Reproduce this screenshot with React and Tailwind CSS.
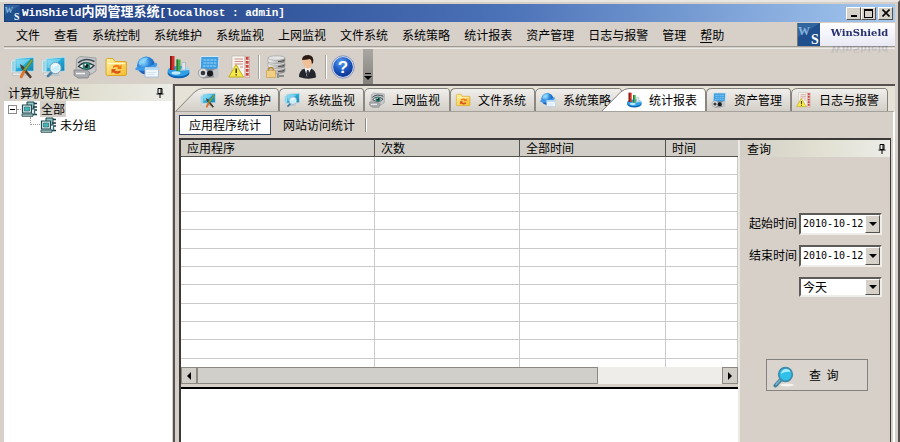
import { useState } from "react";

const menus = [
  "文件", "查看", "系统控制", "系统维护", "系统监视", "上网监视", "文件系统",
  "系统策略", "统计报表", "资产管理", "日志与报警", "管理",
];

/* Shared gradients for the toolbar and tab icons */
function IconDefs() {
  return (
    <svg className="absolute h-0 w-0" aria-hidden="true">
      <defs>
        <linearGradient id="screen" x1="0" y1="0" x2="1" y2="1">
          <stop offset="0" stopColor="#7fdcf5" />
          <stop offset="0.5" stopColor="#25a9d8" />
          <stop offset="1" stopColor="#0d7fae" />
        </linearGradient>
        <linearGradient id="folder" x1="0" y1="0" x2="1" y2="1">
          <stop offset="0" stopColor="#fff3a0" />
          <stop offset="1" stopColor="#f3bb2c" />
        </linearGradient>
        <radialGradient id="globe" cx="0.35" cy="0.3" r="0.8">
          <stop offset="0" stopColor="#9fe0ff" />
          <stop offset="0.45" stopColor="#2a86dc" />
          <stop offset="1" stopColor="#0b3f9c" />
        </radialGradient>
        <radialGradient id="help" cx="0.4" cy="0.25" r="0.8">
          <stop offset="0" stopColor="#5b9cec" />
          <stop offset="0.5" stopColor="#1f5cc4" />
          <stop offset="1" stopColor="#0b2f8c" />
        </radialGradient>
        <linearGradient id="metal" x1="0" y1="0" x2="1" y2="0">
          <stop offset="0" stopColor="#f4f4f4" />
          <stop offset="0.6" stopColor="#b4b4b4" />
          <stop offset="1" stopColor="#7c7c7c" />
        </linearGradient>
        <linearGradient id="tabFill" x1="0" y1="0" x2="0" y2="1">
          <stop offset="0" stopColor="#f1efec" />
          <stop offset="1" stopColor="#d3cfc8" />
        </linearGradient>
      </defs>
    </svg>
  );
}

function Icon({ className, children }) {
  return (
    <svg viewBox="0 0 24 24" className={className} aria-hidden="true">
      {children}
    </svg>
  );
}

function Monitors() {
  return (
    <>
      <path d="M.5 6 8 5v11l-7.500 1z" fill="#8fd6ea" stroke="#d8e6ea" strokeWidth="1" />
      <path d="M1 18h8l1 2.500H2z" fill="#e9e9e9" stroke="#aaa" strokeWidth=".5" />
      <path d="M4 3.500 23 2v14L4 17z" fill="url(#screen)" stroke="#c4dbe2" strokeWidth="1.200" />
      <path d="m5.500 5 14-1.200-10 9-4 .2z" fill="#a8ecfb" opacity=".5" />
      <path d="M10 17h6l2 4H9z" fill="#bcc5c8" />
    </>
  );
}

function MaintainIcon({ className }) {
  return (
    <Icon className={className}>
      <Monitors />
      <path d="m9 9 3 2 9 11-2 1.500L10 13z" fill="#4c3d2f" />
      <path d="M20.500 4 22 5.500 14.500 16 12 15z" fill="#7da83c" stroke="#4e6830" strokeWidth=".5" />
      <path d="m12 15 2.500 1.500-3.500 7-2.500-1z" fill="#e0722a" />
    </Icon>
  );
}

function WatchIcon({ className }) {
  return (
    <Icon className={className}>
      <Monitors />
      <path d="m10 17-4 4" stroke="#4a7fa4" strokeWidth="2.800" strokeLinecap="round" />
      <circle cx="13.500" cy="13" r="4.800" fill="#c9effa" stroke="#e8f3f8" strokeWidth="2" />
      <circle cx="13.500" cy="13" r="5.600" fill="none" stroke="#578ba8" strokeWidth=".7" />
      <path d="M11 12.500q1-3 4-2.500" stroke="#fff" strokeWidth="1.400" fill="none" />
    </Icon>
  );
}

function EyeIcon({ className }) {
  return (
    <Icon className={className}>
      <path d="M3.500 4 7 1.500 23 3v13l-6 4-14-2z" fill="#c6c8ca" stroke="#939598" strokeWidth=".8" />
      <path d="M1 15h13l3 3-2 5H5l-4-3z" fill="#a9abae" stroke="#77797c" strokeWidth=".7" />
      <path d="M3 18.500h9" stroke="#f4f4f4" strokeWidth="1.500" />
      <path d="M5.500 11.500q6-7 15.500-1-6 7-15.500 1z" fill="#f4f7f7" stroke="#2c3b40" strokeWidth="1.300" />
      <circle cx="13.500" cy="11" r="3.800" fill="#2f8376" />
      <circle cx="13.500" cy="11" r="1.900" fill="#0d2320" />
      <circle cx="12.300" cy="9.700" r=".9" fill="#fff" />
      <path d="M5 8q7-6 16.500-1.500" fill="none" stroke="#3e4b52" strokeWidth="1.500" />
    </Icon>
  );
}

function FolderIcon({ className }) {
  return (
    <Icon className={className}>
      <path d="M2 5q0-1.500 1.500-1.500H9l2 3h10q1.500 0 1.500 1.500v11q0 1.500-1.500 1.500H3.500Q2 20.500 2 19z" fill="url(#folder)" stroke="#d9a01f" strokeWidth=".9" />
      <path d="M3.500 8.500H21" stroke="#fff8cf" strokeWidth="1.200" />
      <path d="M9 11q4-2.500 7 0l1.500-1.500V14h-4.500l1.300-1.300Q12 11.300 9 13z" fill="#ee7a1b" />
      <path d="M16.500 17.500q-4 2.500-7.500-.3L7.500 18.500V14H12l-1.300 1.400q2.300 1.600 5.800 0z" fill="#d9531a" />
    </Icon>
  );
}

function WebIcon({ className }) {
  return (
    <Icon className={className}>
      <circle cx="11" cy="10.500" r="9" fill="url(#globe)" />
      <path d="M4 7q4-5 9-4-1 3-4 3.500T6 10q-3 0-2-3z" fill="#8edcff" opacity=".7" />
      <path d="M.5 15Q-.5 11 6 12.500q9 .5 15-5 3 2-1 5-7 5-19.500 2.500z" fill="#3f9be9" />
      <path d="M10 12.500h13.500V22H10z" fill="#eef6fd" stroke="#9fb9d6" strokeWidth=".8" />
      <path d="M10 12.500h13.500V15H10z" fill="#b9dcf7" />
      <path d="M12 17.500h9M12 19.500h7" stroke="#cfe0ef" strokeWidth=".8" />
    </Icon>
  );
}

function ChartIcon({ className }) {
  return (
    <Icon className={className}>
      <ellipse cx="12.500" cy="18" rx="11" ry="5.200" fill="#0f62b4" />
      <ellipse cx="12.500" cy="16" rx="11" ry="5.200" fill="#2f9fe6" />
      <path d="m12.500 16 11-1q-1-3-6-3.800z" fill="#9bdcfa" />
      <path d="M4 1h4.500v14H4z" fill="#d0322a" />
      <path d="M4 1h1.700v14H4z" fill="#7d1713" />
      <path d="M10.500 4.500h4V16h-4z" fill="#49ad4e" />
      <path d="M10.500 4.500H12V16h-1.500z" fill="#257a35" />
      <path d="M16 7.500h3.500V15H16z" fill="#dfe5ea" stroke="#95a3b1" strokeWidth=".5" />
      <ellipse cx="10" cy="18" rx="4.500" ry="1.700" fill="#bfeafb" />
    </Icon>
  );
}

function AssetIcon({ className }) {
  return (
    <Icon className={className}>
      <path d="M4 1.500h18L21 17H3z" fill="#3f9fe2" stroke="#d6e4ee" strokeWidth="1" />
      <path d="M6.500 5H20M6.500 8H19.500M6 11h13" stroke="#a5d8fa" strokeWidth="1" strokeDasharray="2.600 .8" />
      <path d="m2 15 17-1.500 2 8.500-15 1.500z" fill="#8b8f94" />
      <path d="m16 15 5.500-2v9l-4.500 1z" fill="#c2c6ca" />
      <circle cx="6" cy="18" r="4.700" fill="#dadcde" stroke="#8c8f93" strokeWidth=".7" />
      <circle cx="6" cy="18" r="2.300" fill="#33373c" />
      <circle cx="13" cy="18.500" r="3" fill="#17191c" />
    </Icon>
  );
}

function LogIcon({ className }) {
  return (
    <Icon className={className}>
      <path d="M4 1h13v20.500H4z" fill="#f7f5f0" stroke="#b9b5ae" strokeWidth=".7" />
      <path d="M6.500 4H15M6.500 6.500H15M6.500 9H15M12 12h3" stroke="#cf8d85" strokeWidth="1" />
      <path d="M17 1.500h4.500v21H17z" fill="#f1d9d4" stroke="#c98b84" strokeWidth=".5" />
      <path d="M19.200 2v20" stroke="#c84640" strokeWidth="2.800" strokeDasharray="2.800 1.200" />
      <path d="M8 9.500 15.500 22H.8z" fill="#f5e94a" stroke="#c3ac1e" strokeWidth="1" strokeLinejoin="round" />
      <path d="M8.200 13.500v4.500M8.200 19.200v1.300" stroke="#4a431a" strokeWidth="1.600" />
    </Icon>
  );
}

function DatabaseIcon({ className }) {
  return (
    <Icon className={className}>
      <path d="M14 18v5M14 21h6" stroke="#8d8d8d" strokeWidth="2" />
      {[13, 8, 3].map((y) => (
        <g key={y}>
          <path d={`M4 ${y}v3q0 2.500 8.500 2.500T21 ${y + 3}v-3z`} fill="url(#metal)" stroke="#888" strokeWidth=".5" />
          <ellipse cx="12.500" cy={y} rx="8.500" ry="2.200" fill="#e3e3e3" stroke="#929292" strokeWidth=".5" />
          <path d={`M14 ${y + 3.5}q4 0 6-1`} stroke="#4d4d4d" strokeWidth="1" fill="none" />
        </g>
      ))}
      <path d="M4.500 15.500q0-3 2.500-3t2.500 3" fill="none" stroke="#b98a28" strokeWidth="1.300" />
      <path d="M2.500 15.500h9v7h-9z" fill="#f0cf85" stroke="#c6973a" strokeWidth=".6" />
    </Icon>
  );
}

function UserIcon({ className }) {
  return (
    <Icon className={className}>
      <path d="M4 22q0-7 6-8.500h6q5 1.500 5 9-8 2.500-17-.5z" fill="#25262c" />
      <path d="m9.500 13 2.500 9 4.500-9z" fill="#f4f4f4" />
      <path d="m12 15 1.600.2.700 3.500-2 3-1-3.500z" fill="#2c3140" />
      <path d="M7 5q0-3.500 5-3.500t5.500 4.500q0 5.500-4.500 8-5-2-6-9z" fill="#eebf96" />
      <path d="M7 5q0-5 6.500-5 6 .5 4.500 8l-1.200 1q0-4-1.800-5Q11 5 7 5z" fill="#2a1b14" />
    </Icon>
  );
}

function HelpIcon({ className }) {
  return (
    <Icon className={className}>
      <circle cx="12" cy="12" r="11.200" fill="#dfe5f1" stroke="#6d83b4" strokeWidth=".8" />
      <circle cx="12" cy="12" r="9.900" fill="url(#help)" />
      <text x="12" y="17.800" textAnchor="middle" fontSize="17" fontWeight="700" fontFamily="'Liberation Sans', sans-serif" fill="#fff">
        ?
      </text>
    </Icon>
  );
}

function ComputersIcon() {
  return (
    <svg viewBox="0 0 17 16" className="h-4 w-[17px] shrink-0" aria-hidden="true">
      <path d="M6 1h7v7H6z" fill="#93c9c4" stroke="#1d3f49" />
      <path d="M13 2.500h3M12 6h4M13 9h3M11 13.500h5" stroke="#173844" strokeWidth="1.500" />
      <path d="M1.500 4h9v8h-9z" fill="#d9e9e6" stroke="#1d4b55" strokeWidth="1.200" />
      <path d="M3.500 6h5v4h-5z" fill="#3fb9b8" stroke="#235661" strokeWidth=".6" />
      <path d="M1 13h11v2.300H1z" fill="#a9cbc7" stroke="#1d3f49" strokeWidth=".8" />
      <path d="M13.500 9.500v4" stroke="#35707a" strokeWidth="1.500" />
    </svg>
  );
}

function SearchIcon() {
  return (
    <svg viewBox="0 0 24 24" className="mt-1 h-6 w-6 shrink-0" aria-hidden="true">
      <ellipse cx="14" cy="20" rx="7" ry="1.500" fill="#f4f4f2" />
      <path d="m7.500 15-5 5.500" stroke="#3f7f9c" strokeWidth="4" strokeLinecap="round" />
      <path d="m7.500 14.500-4.500 5" stroke="#74b7d0" strokeWidth="1.500" strokeLinecap="round" />
      <circle cx="12.500" cy="9.500" r="6.800" fill="#31c0ea" stroke="#3f89ab" strokeWidth="1.700" />
      <path d="M8 9q.5-5 5.500-5 3 0 4 3-5.500-1-9.500 2z" fill="#a8edfb" />
    </svg>
  );
}

function PinIcon() {
  return (
    <svg viewBox="0 0 8 10" className="h-2.5 w-2" aria-hidden="true">
      <path d="M2 .5h4v5H2zM5 .5v5M.5 6h7M4 6v4" fill="none" stroke="#000" strokeWidth="1" />
    </svg>
  );
}

function Arrow({ direction }) {
  const points = {
    down: "0,2 8,2 4,6",
    left: "6,0 6,8 2,4",
    right: "2,0 2,8 6,4",
  };
  return (
    <svg viewBox="0 0 8 8" className="h-2 w-2" aria-hidden="true">
      <polygon points={points[direction]} fill="#000" />
    </svg>
  );
}

function Logo({ className }) {
  return (
    <svg viewBox="0 0 22 23" className={className} aria-hidden="true">
      <rect width="22" height="23" fill="#1f4f8c" />
      <path d="M0 0h22L0 14z" fill="#3d74ad" opacity=".6" />
      <text x="0" y="12" fontSize="12" fontFamily="'Liberation Serif', serif" fontWeight="700" fill="#86b2dc">W</text>
      <text x="13" y="21" fontSize="14" fontFamily="'Liberation Serif', serif" fontWeight="700" fill="#fff">S</text>
    </svg>
  );
}

const toolGroups = [
  [
    { icon: MaintainIcon, label: "系统维护" },
    { icon: WatchIcon, label: "系统监视" },
    { icon: EyeIcon, label: "上网监视" },
    { icon: FolderIcon, label: "文件系统" },
    { icon: WebIcon, label: "系统策略" },
    { icon: ChartIcon, label: "统计报表" },
    { icon: AssetIcon, label: "资产管理" },
    { icon: LogIcon, label: "日志与报警" },
  ],
  [
    { icon: DatabaseIcon, label: "数据库" },
    { icon: UserIcon, label: "用户" },
  ],
  [{ icon: HelpIcon, label: "帮助" }],
];

const tabs = [
  { icon: MaintainIcon, label: "系统维护", width: "w-[103px]", slanted: true },
  { icon: WatchIcon, label: "系统监视", width: "w-[85px]" },
  { icon: EyeIcon, label: "上网监视", width: "w-[86px]" },
  { icon: FolderIcon, label: "文件系统", width: "w-[85px]" },
  { icon: WebIcon, label: "系统策略", width: "w-[87px]" },
  { icon: ChartIcon, label: "统计报表", width: "w-[104px] -ml-5", slanted: true, active: true },
  { icon: AssetIcon, label: "资产管理", width: "w-[85px]" },
  { icon: LogIcon, label: "日志与报警", width: "w-[97px]" },
];

const columns = [
  { label: "应用程序", width: "w-[194px]" },
  { label: "次数", width: "w-[145px]" },
  { label: "全部时间", width: "w-[146px]" },
  { label: "时间", width: "" },
];

const raised = "border border-t-white border-l-white border-r-[#55524d] border-b-[#55524d] bg-[#d6d2ca]";
const sunken = "border-2 border-t-[#5d5b58] border-l-[#5d5b58] border-r-[#efedea] border-b-[#efedea] bg-white";

function TitleBar() {
  return (
    <header className="flex h-[18px] items-center bg-linear-to-r from-[#1b3a7e] via-[#4a70b6] via-55% to-[#a5c8ef] pr-0.5">
      <Logo className="h-4 w-[17px]" />
      <h1 className="ml-px flex-1 font-['Liberation_Mono','Noto_Sans_CJK_SC',monospace] text-[11px] leading-4 font-bold whitespace-nowrap text-white">
        WinShield<span className="text-[13px]">内网管理系统</span>[localhost : admin]
      </h1>
      <div className="flex">
        <button type="button" aria-label="最小化" className={`flex h-[13px] w-[15px] items-end justify-center pb-0.5 ${raised}`}>
          <span className="h-0.5 w-1.5 bg-black" />
        </button>
        <button type="button" aria-label="最大化" className={`flex h-[13px] w-[15px] items-center justify-center ${raised}`}>
          <span className="h-[9px] w-[9px] border border-t-2 border-black" />
        </button>
        <button type="button" aria-label="关闭" className={`ml-0.5 flex h-[13px] w-[15px] items-center justify-center ${raised}`}>
          <svg viewBox="0 0 8 8" className="h-2 w-2" aria-hidden="true">
            <path d="m.5.5 7 7M7.500.5l-7 7" stroke="#000" strokeWidth="1.600" />
          </svg>
        </button>
      </div>
    </header>
  );
}

function MenuBar() {
  return (
    <div className="mt-px flex h-6 items-center border-b border-[#9d9993]">
      <nav className="flex flex-1 gap-3.5 pl-3 whitespace-nowrap">
        {menus.map((menu) => (
          <button key={menu} type="button">{menu}</button>
        ))}
        <button type="button"><span className="underline underline-offset-2">帮</span>助</button>
      </nav>
      <div className="flex h-[23px] w-[98px] items-center border-l border-[#777] bg-linear-to-b from-white to-[#e9e9f5]">
        <Logo className="h-[23px] w-[22px]" />
        <span className="flex-1 pb-1 pl-1 text-center font-['DejaVu_Serif',serif] text-[10px] leading-3 font-bold text-[#27306f] [-webkit-box-reflect:below_-4px_linear-gradient(transparent,#00000066)]">
          WinShield
        </span>
      </div>
    </div>
  );
}

function Toolbar() {
  return (
    <div className="mt-px flex h-9 items-stretch border-t border-[#efece8] pl-[7px]">
      {toolGroups.map((group, i) => (
        <div key={i} className="flex items-center">
          {i > 0 && <span className="mr-1 ml-1.5 h-6 w-0.5 border-l border-[#a8a49e] bg-white" />}
          <div className="flex gap-[7px]">
            {group.map(({ icon: ToolIcon, label }) => (
              <button key={label} type="button" aria-label={label}>
                <ToolIcon className="h-6 w-6" />
              </button>
            ))}
          </div>
        </div>
      ))}
      <button type="button" aria-label="工具栏选项" className="ml-2 flex w-2.5 flex-col items-center justify-end bg-linear-to-b from-[#aaa6a1] to-[#85817c] pb-0.5">
        <span className="h-px w-1.5 bg-black" />
        <Arrow direction="down" />
      </button>
    </div>
  );
}

function PanelHeader({ title, className }) {
  return (
    <div className={`flex h-[17px] items-center justify-between bg-linear-to-r from-[#d3cec6] via-[#e0dfd0] to-[#ecece8] ${className}`}>
      <h2>{title}</h2>
      <button type="button" aria-label="固定"><PinIcon /></button>
    </div>
  );
}

function NavTree() {
  return (
    <aside className="flex w-[168px] shrink-0 flex-col bg-white">
      <PanelHeader title="计算机导航栏" className="pr-2 pl-1" />
      <ul className="leading-4">
        <li>
          <div className="flex items-center pl-1">
            <button type="button" aria-label="折叠" className="flex h-[9px] w-[9px] items-center justify-center border border-[#8a8a8a]">
              <span className="h-px w-[5px] bg-black" />
            </button>
            <span className="w-1 border-t border-dotted border-[#999]" />
            <ComputersIcon />
            <span className="ml-0.5 bg-[#d3cfc8] px-px">全部</span>
          </div>
          <ul>
            <li className="flex items-center pl-[26px]">
              <span className="mb-2 h-2 w-2.5 border-b border-l border-dotted border-[#999]" />
              <ComputersIcon />
              <span className="ml-[3px]">未分组</span>
            </li>
          </ul>
        </li>
      </ul>
    </aside>
  );
}

function Tab({ tab }) {
  const TabIcon = tab.icon;
  return (
    <button
      type="button"
      role="tab"
      aria-selected={Boolean(tab.active)}
      className={`relative flex h-[23px] shrink-0 items-center gap-[7px] whitespace-nowrap ${tab.slanted ? "pl-6" : "pl-[5px]"} ${tab.width}`}
    >
      <svg className="absolute inset-0 h-full w-full" viewBox="0 0 100 23" preserveAspectRatio="none" aria-hidden="true">
        <path
          d={tab.slanted ? "M0 23 18 4Q22 .5 26 .5H97Q99.500 1 99.500 4V23" : "M.5 23V5Q1 .5 7 .5H97Q99.500 1 99.500 4V23"}
          fill={tab.active ? "#fff" : "url(#tabFill)"}
          stroke="#85817b"
          vectorEffect="non-scaling-stroke"
        />
      </svg>
      <TabIcon className="relative h-4 w-4 shrink-0" />
      <span className="relative">{tab.label}</span>
    </button>
  );
}

function ResultTable() {
  return (
    <div className="h-[227px] overflow-hidden bg-white">
      <table className="h-[237px] w-full table-fixed border-separate border-spacing-0 text-left">
        <thead>
          <tr>
            {columns.map((column) => (
              <th key={column.label} className={`h-[17px] border-r border-b border-r-[#55524d] border-b-[#55524d] bg-[#d1cec8] p-0 pl-1.5 leading-4 font-normal last:border-r-0 ${column.width}`}>
                {column.label}
              </th>
            ))}
          </tr>
        </thead>
        <tbody>
          {Array.from({ length: 12 }, (_, row) => (
            <tr key={row}>
              {columns.map((column) => (
                <td key={column.label} className="border-r border-b border-[#cbcac8] p-0" />
              ))}
            </tr>
          ))}
        </tbody>
      </table>
    </div>
  );
}

function ScrollBar() {
  return (
    <div className="flex h-[17px] bg-[#eeede9]">
      <button type="button" aria-label="向左滚动" className="flex w-4 items-center justify-center border border-[#8c8983] bg-[#d1cec8]">
        <Arrow direction="left" />
      </button>
      <div className="w-[72%] border border-[#8c8983] bg-[#d1cfc9]" />
      <div className="flex-1" />
      <button type="button" aria-label="向右滚动" className="flex w-4 items-center justify-center border border-[#8c8983] bg-[#d1cec8]">
        <Arrow direction="right" />
      </button>
    </div>
  );
}

function DateField({ id, label, value, onChange }) {
  return (
    <div className="flex justify-between">
      <label htmlFor={id} className="pt-0.5 leading-4">{label}</label>
      <div className={`flex h-[22px] w-[83px] ${sunken}`}>
        <input
          id={id}
          type="text"
          value={value}
          onChange={(e) => onChange(e.target.value)}
          className="w-full min-w-0 flex-1 pl-0.5 font-['DejaVu_Sans_Mono',monospace] text-[10px] outline-none"
        />
        <button type="button" aria-label={`选择${label}`} className={`flex w-[15px] shrink-0 items-center justify-center ${raised}`}>
          <Arrow direction="down" />
        </button>
      </div>
    </div>
  );
}

function QueryPanel() {
  const [start, setStart] = useState("2010-10-12");
  const [end, setEnd] = useState("2010-10-12");

  return (
    <form className="flex w-[152px] shrink-0 flex-col border-l-2 border-[#ece9e4] bg-[#d6d0c9]" onSubmit={(e) => e.preventDefault()}>
      <PanelHeader title="查询" className="pr-1 pl-[7px]" />
      <div className="mt-14 flex flex-col gap-2.5 pr-2 pl-[9px]">
        <DateField id="start" label="起始时间" value={start} onChange={setStart} />
        <DateField id="end" label="结束时间" value={end} onChange={setEnd} />
        <div className={`relative h-5 w-[83px] self-end ${sunken}`}>
          <select aria-label="时间范围" className="h-4 w-full appearance-none pl-0.5 leading-4 outline-none">
            <option>今天</option>
          </select>
          <span className={`pointer-events-none absolute inset-y-0 right-0 flex w-[15px] items-center justify-center ${raised}`}>
            <Arrow direction="down" />
          </span>
        </div>
      </div>
      <button type="submit" className="mt-[62px] ml-[26px] flex h-8 w-[102px] items-center border border-[#85827d] bg-[#d9d5ce] pl-1.5">
        <SearchIcon />
        <span className="ml-3">查&nbsp; 询</span>
      </button>
    </form>
  );
}

export default function App() {
  return (
    <div className="flex min-h-screen flex-col border-t-2 border-r-2 border-t-[#e9e6e1] border-r-[#55524f] bg-[#d6d0c9] pt-0.5 pr-[3px] pl-1 font-['Noto_Sans_CJK_SC',sans-serif] text-xs leading-4 text-black">
      <IconDefs />
      <TitleBar />
      <MenuBar />
      <Toolbar />
      <div className="flex flex-1">
        <NavTree />
        <main className="ml-px flex min-w-0 flex-1 flex-col border-t-2 border-l-2 border-[#55524f] bg-[#d6d0c9]">
          <div role="tablist" className="flex items-end bg-[#e6e2d8] pt-0.5 pl-px">
            {tabs.map((tab) => (
              <Tab key={tab.label} tab={tab} />
            ))}
          </div>
          <div className="flex flex-1 flex-col border-t border-r-2 border-t-[#a5a19b] border-r-white pr-0.5 pl-1">
            <div className="flex h-[26px] items-center">
              <button type="button" className="h-5 w-[92px] border border-[#33415a] bg-white">应用程序统计</button>
              <button type="button" className="ml-3">网站访问统计</button>
              <span className="ml-2.5 h-3.5 w-0.5 border-l border-[#8f8b85] bg-white" />
            </div>
            <div className="flex flex-1 border-t-2 border-r border-l-2 border-[#3c3a38]">
              <section className="flex min-w-0 flex-1 flex-col">
                <ResultTable />
                <ScrollBar />
                <div className="mt-[3px] flex-1 border-t-2 border-black bg-white" />
              </section>
              <QueryPanel />
            </div>
          </div>
        </main>
      </div>
    </div>
  );
}
